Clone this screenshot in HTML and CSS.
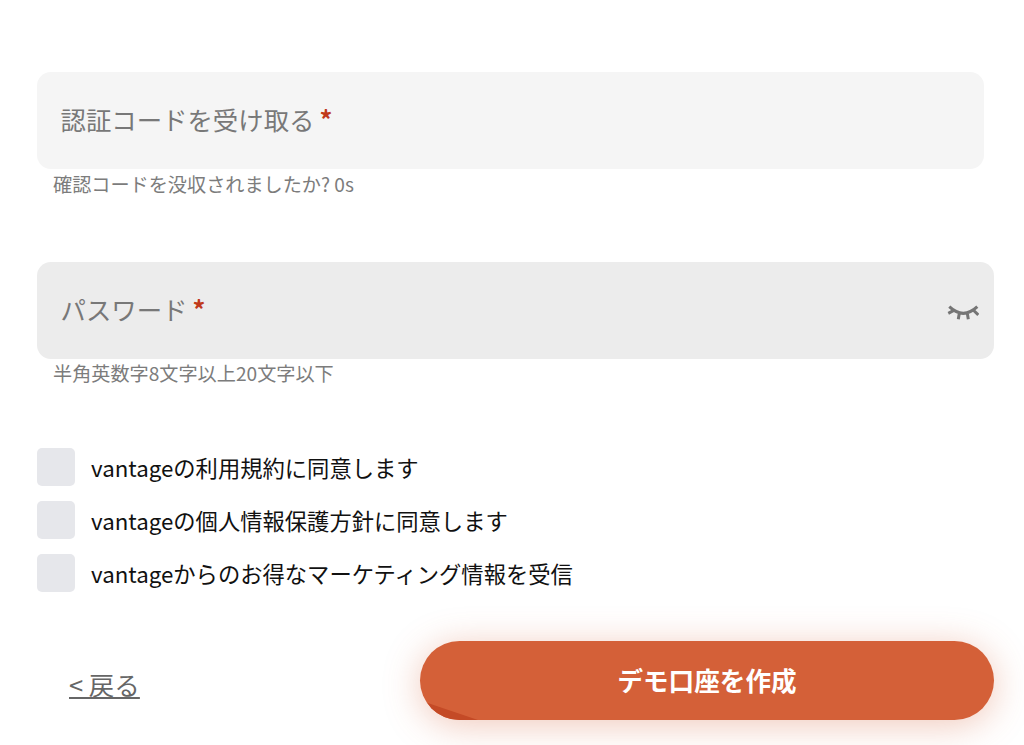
FILE: index.html
```html
<!DOCTYPE html>
<html lang="ja">
<head>
    <meta charset="UTF-8">
    <meta name="viewport" content="width=device-width, initial-scale=1.0">
    <title>デモ口座を作成</title>
    <link rel="stylesheet" href="styles.css">
</head>
<body>
    <form class="form">
        <div class="field field-code">
            <div class="inputbox code">
                <span class="label">認証コードを受け取る<em>*</em></span>
            </div>
            <p class="hint">確認コードを没収されましたか? 0s</p>
        </div>
        <div class="field field-pass">
            <div class="inputbox pass">
                <span class="label">パスワード<em>*</em></span>
                <svg class="eye" viewBox="0 0 32 18" width="32" height="18">
                    <path d="M2.300 2.700Q16.300 16 30.300 2.700M1.300 9.300L6.300 6.700M11.300 15.300L12.300 9.300M21.300 15.300L20.300 9.300M31.300 11L27 6.700" fill="none" stroke="#757575" stroke-width="3"/>
                </svg>
            </div>
            <p class="hint">半角英数字8文字以上20文字以下</p>
        </div>
        <div class="checks">
            <label class="check"><span class="box"></span>vantageの利用規約に同意します</label>
            <label class="check"><span class="box"></span>vantageの個人情報保護方針に同意します</label>
            <label class="check"><span class="box"></span>vantageからのお得なマーケティング情報を受信</label>
        </div>
        <div class="actions">
            <a class="back" href="#">&lt; 戻る</a>
            <button type="button" class="btn">デモ口座を作成</button>
        </div>
    </form>
</body>
</html>
```

FILE: styles.css
```css
* {
    box-sizing: border-box;
}
html, body {
    height: 745px;
    overflow: hidden;
}
body {
    margin: 0;
    background-color: #fff;
    font-family: "Noto Sans CJK JP", "Noto Sans", sans-serif;
}
.form {
    padding: 72px 30px 0 37px;
}
.field-code {
    margin-bottom: 68px;
}
.field-pass {
    margin-bottom: 65px;
}
.inputbox {
    display: flex;
    align-items: center;
    justify-content: space-between;
    height: 97px;
    padding: 0 15px 0 23.5px;
    border-radius: 14px;
}
.code {
    width: 947px;
    background-color: #f5f5f5;
}
.pass {
    background-color: #ececec;
}
.label {
    margin-bottom: 3px;
    color: #787878;
    font-size: 25.4px;
}
.label em {
    margin-left: 5px;
    color: #c0391b;
    font-style: normal;
    font-weight: 700;
}
.eye {
    margin-top: 5px;
}
.hint {
    margin: 5px 0 0 16px;
    color: #7c7c7c;
    font-size: 19.15px;
    line-height: 20px;
}
.field-pass .hint {
    margin-top: 4px;
}
.checks {
    display: flex;
    flex-direction: column;
    gap: 15px;
}
.check {
    display: flex;
    align-items: center;
    gap: 16px;
    color: #111;
    font-size: 22.3px;
    line-height: 38px;
}
.box {
    width: 38px;
    height: 38px;
    border-radius: 5px;
    background-color: #e6e7eb;
}
.actions {
    display: flex;
    align-items: center;
    justify-content: space-between;
    margin-top: 49px;
    padding-left: 32px;
}
.back {
    margin-top: 6px;
    color: #666;
    font-size: 25.5px;
}
.btn {
    position: relative;
    overflow: hidden;
    width: 574px;
    height: 79px;
    padding: 0 0 2px;
    border: 0;
    border-radius: 40px;
    background-color: #d46038;
    color: #fff;
    font-family: inherit;
    font-size: 25.6px;
    font-weight: 700;
    box-shadow: 0 5px 36px rgb(212 96 56 / 35%);
}
.btn::after {
    content: "";
    position: absolute;
    left: -4px;
    bottom: 0;
    width: 62px;
    height: 21px;
    background-color: #c44a26;
    clip-path: polygon(0 0, 100% 100%, 0 100%);
}
```
